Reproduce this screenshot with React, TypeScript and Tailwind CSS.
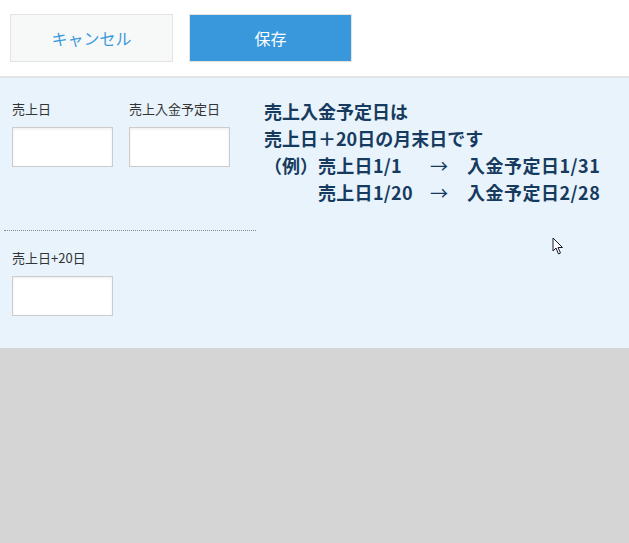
const font = {
  fontFamily: '"Noto Sans CJK JP", "Noto Sans", sans-serif',
};

const Field = ({ label }: { label: string }) => (
  <div className="flex flex-col">
    <label className="text-[13px] leading-[16px] text-[#333]">{label}</label>
    <input
      type="text"
      className="mt-[10px] h-[40px] w-[101px] border border-[#cccccc] bg-white shadow-[inset_0_1px_3px_rgba(0,0,0,0.08)] outline-none"
    />
  </div>
);

const Cursor = () => (
  <svg
    className="absolute left-[552px] top-[237px]"
    width="13"
    height="19"
    viewBox="0 0 13 19"
  >
    <path
      d="M1 1 L1 14 L4 11 L6.5 17 L8.5 16 L6 10.5 L10.5 10.5 Z"
      fill="#fff"
      stroke="#1a1a2a"
      strokeWidth="1"
      strokeLinejoin="round"
    />
  </svg>
);

export default function App() {
  return (
    <div className="relative min-h-[543px] w-full bg-[#d4d5d4]" style={font}>
      <div className="flex h-[78px] gap-[16px] border-b-2 border-[#e4e4e4] bg-white px-[10px] pt-[14px]">
        <button className="h-[48px] w-[163px] border border-[#e3e3e3] bg-[#f7f9f9] text-[16px] text-[#3a9ad9]">
          キャンセル
        </button>
        <button className="h-[48px] w-[163px] border border-[#e3e3e3] bg-[#3898db] text-[16px] text-white">
          保存
        </button>
      </div>

      <div className="flex h-[270px] bg-[#e8f3fc]">
        <div className="w-[256px] pl-[4px] pt-[23px]">
          <div className="flex gap-[16px] pl-[8px]">
            <Field label="売上日" />
            <Field label="売上入金予定日" />
          </div>
          <div className="mt-[63px] border-t border-dotted border-[#888]" />
          <div className="pl-[8px] pt-[19px]">
            <Field label="売上日+20日" />
          </div>
        </div>

        <div className="pl-[8px] pt-[20px] text-[18px] font-bold leading-[27px] text-[#173b5e]">
          <p>売上入金予定日は</p>
          <p>売上日＋20日の月末日です</p>
          <div className="flex">
            <span className="w-[54px]">（例）</span>
            <span className="w-[112px] tracking-[0.3px]">売上日1/1</span>
            <span className="w-[37px] font-normal">→</span>
            <span className="tracking-[0.5px]">入金予定日1/31</span>
          </div>
          <div className="flex">
            <span className="w-[54px]" />
            <span className="w-[112px] tracking-[0.3px]">売上日1/20</span>
            <span className="w-[37px] font-normal">→</span>
            <span className="tracking-[0.5px]">入金予定日2/28</span>
          </div>
        </div>
      </div>

      <Cursor />
    </div>
  );
}
